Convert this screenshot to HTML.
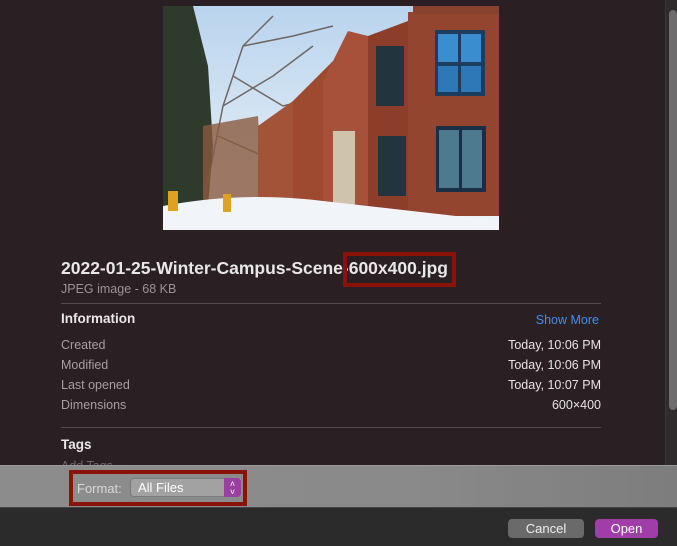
<!DOCTYPE html>
<html><head><meta charset="utf-8"><style>
*{margin:0;padding:0;box-sizing:border-box}
body{width:677px;height:546px;overflow:hidden;background:#2a2024;font-family:"Liberation Sans",Arial,sans-serif;position:relative;color:#ddd}
.a{position:absolute}
.lbl{font-size:12.5px;color:#a49fa1;left:61px}
.val{font-size:12.5px;color:#e6e3e4;right:76px;text-align:right}
</style></head><body>
<div class="a" style="left:665px;top:0;width:12px;height:465px;background:#2f2b2d;border-left:1px solid #3a3638"></div>
<div class="a" style="left:669px;top:10px;width:8px;height:400px;background:#6e6c6d;border-radius:4px"></div>

<svg class="a" style="left:163px;top:6px" width="336" height="224" viewBox="0 0 336 224">
<defs><linearGradient id="sky" x1="0" y1="0" x2="0" y2="1"><stop offset="0" stop-color="#b9d4ee"/><stop offset="1" stop-color="#eef3f7"/></linearGradient></defs>
<rect width="336" height="224" fill="url(#sky)"/>
<path d="M0 0 L30 0 L45 60 L50 140 L45 200 L0 200Z" fill="#2e3a2c"/>
<g stroke="#5a4a40" stroke-width="1.5" fill="none" opacity=".8">
<path d="M40 200 L60 100 L80 40 L110 10"/><path d="M60 100 L110 70 L150 40"/><path d="M70 70 L120 100 L160 90"/><path d="M80 40 L130 30 L170 20"/><path d="M55 130 L100 150"/>
</g>
<path d="M40 120 L95 110 L100 200 L40 200Z" fill="#8a5a40" opacity=".8"/>
<path d="M95 120 L130 95 L130 200 L95 200Z" fill="#a35438"/>
<path d="M130 95 L180 45 L190 35 L205 40 L205 200 L130 200Z" fill="#9e4a30"/>
<path d="M160 75 L185 25 L205 30 L205 200 L160 200Z" fill="#a8513a"/>
<path d="M205 30 L245 15 L245 205 L205 205Z" fill="#8c3e2a"/>
<path d="M245 6 L336 6 L336 210 L245 210Z" fill="#934530"/>
<rect x="250" y="0" width="86" height="8" fill="#8a4230"/>
<rect x="272" y="24" width="50" height="66" fill="#1d3d5e"/><rect x="275" y="28" width="20" height="28" fill="#3a8ed0"/><rect x="298" y="28" width="20" height="28" fill="#3a8ed0"/><rect x="275" y="60" width="20" height="26" fill="#2f78b8"/><rect x="298" y="60" width="20" height="26" fill="#2f78b8"/>
<rect x="273" y="120" width="50" height="66" fill="#1b2f44"/><rect x="276" y="124" width="20" height="58" fill="#4e7a8f"/><rect x="299" y="124" width="20" height="58" fill="#4e7a8f"/>
<rect x="213" y="40" width="28" height="60" fill="#22343e"/><rect x="215" y="130" width="28" height="60" fill="#22343e"/>
<rect x="170" y="125" width="22" height="85" fill="#cfc3ae"/>
<path d="M0 200 Q80 185 160 195 Q250 205 336 215 L336 224 L0 224Z" fill="#f1f5fa"/>
<rect x="5" y="185" width="10" height="20" fill="#e0a020"/>
<rect x="60" y="188" width="8" height="18" fill="#e0a020"/>
</svg>

<div class="a" style="left:61px;top:258px;font-size:17.5px;font-weight:bold;color:#e8e6e7;white-space:nowrap">2022-01-25-Winter-Campus-Scene-600x400.jpg</div>
<div class="a" style="left:343px;top:252px;width:113px;height:35px;border:4px solid #8a1208"></div>
<div class="a" style="left:61px;top:282px;font-size:12.5px;color:#999496">JPEG image - 68 KB</div>
<div class="a" style="left:61px;top:303px;width:540px;height:1px;background:#524b4e"></div>
<div class="a" style="left:61px;top:311px;font-size:13.5px;font-weight:bold;color:#e8e6e7">Information</div>
<div class="a" style="right:78px;top:313px;font-size:12.5px;color:#3f8ff0">Show More</div>
<div class="a lbl" style="top:338px">Created</div><div class="a val" style="top:338px">Today, 10:06 PM</div>
<div class="a lbl" style="top:358px">Modified</div><div class="a val" style="top:358px">Today, 10:06 PM</div>
<div class="a lbl" style="top:378px">Last opened</div><div class="a val" style="top:378px">Today, 10:07 PM</div>
<div class="a lbl" style="top:398px">Dimensions</div><div class="a val" style="top:398px">600×400</div>
<div class="a" style="left:61px;top:427px;width:540px;height:1px;background:#524b4e"></div>
<div class="a" style="left:61px;top:437px;font-size:13.5px;font-weight:bold;color:#e8e6e7">Tags</div>
<div class="a" style="left:61px;top:459px;font-size:12.5px;color:#6f686b">Add Tags</div>

<div class="a" style="left:0;top:465px;width:677px;height:42px;background:linear-gradient(90deg,#8c8c8c,#8a8a8a 60%,#7d7d7d);border-top:1px solid #9a9a9a"></div>
<div class="a" style="left:69px;top:470px;width:178px;height:36px;border:4px solid #8a1208"></div>
<div class="a" style="left:77px;top:481px;font-size:13px;color:#d8d8d8">Format:</div>
<div class="a" style="left:130px;top:478px;width:111px;height:19px;border-radius:4px;background:#a2a2a2;border:1px solid #7a7a7a"></div>
<div class="a" style="left:138px;top:480px;font-size:13px;color:#fff">All Files</div>
<div class="a" style="left:224px;top:478px;width:17px;height:19px;background:#9b3fa0;border-radius:0 4px 4px 0;color:#fff;font-size:9px;line-height:8px;text-align:center;padding-top:2px">˄<br>˅</div>

<div class="a" style="left:0;top:507px;width:677px;height:39px;background:#2b2b2b;border-top:1px solid #444"></div>
<div class="a" style="left:508px;top:519px;width:76px;height:19px;border-radius:4px;background:#6a6a6a;color:#eee;font-size:13px;text-align:center;line-height:19px">Cancel</div>
<div class="a" style="left:595px;top:519px;width:63px;height:19px;border-radius:4px;background:#a13da8;color:#fff;font-size:13px;text-align:center;line-height:19px">Open</div>
</body></html>
